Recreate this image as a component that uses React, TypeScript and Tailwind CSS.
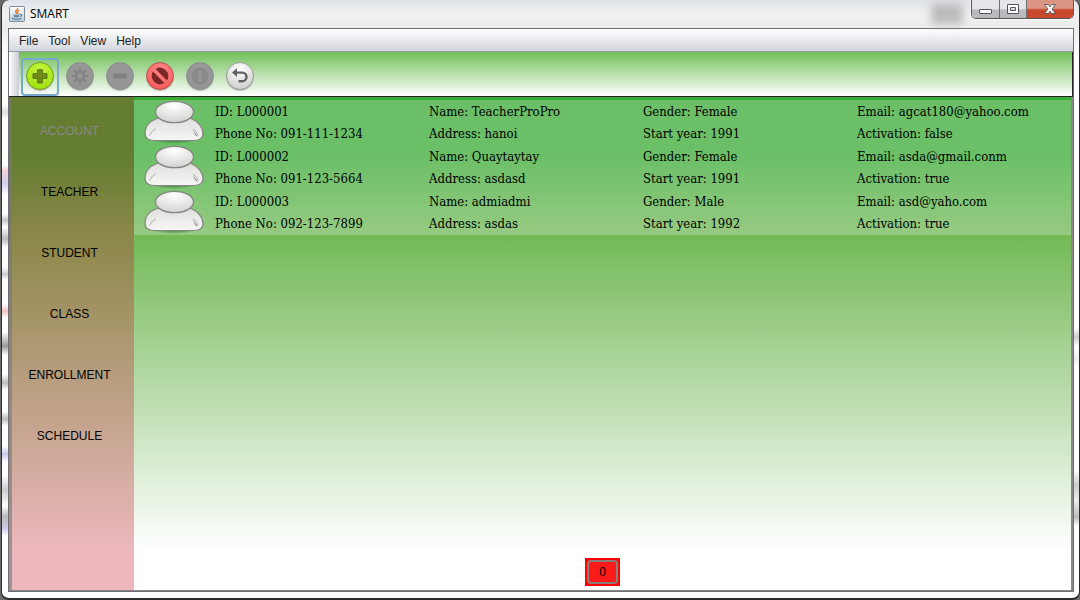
import React from "react";

const menus = ["File", "Tool", "View", "Help"];

const sections = ["ACCOUNT", "TEACHER", "STUDENT", "CLASS", "ENROLLMENT", "SCHEDULE"];

const teachers = [
  { id: "L000001", name: "TeacherProPro", gender: "Female", email: "agcat180@yahoo.com", phone: "091-111-1234", address: "hanoi", year: "1991", active: "false" },
  { id: "L000002", name: "Quaytaytay", gender: "Female", email: "asda@gmail.conm", phone: "091-123-5664", address: "asdasd", year: "1991", active: "true" },
  { id: "L000003", name: "admiadmi", gender: "Male", email: "asd@yaho.com", phone: "092-123-7899", address: "asdas", year: "1992", active: "true" },
];

function JavaIcon() {
  return (
    <svg width="16" height="16" viewBox="0 0 16 16" aria-hidden="true">
      <defs>
        <linearGradient id="javaBg" x1="0" y1="0" x2="0" y2="1">
          <stop offset="0" stopColor="#ffffff" />
          <stop offset="1" stopColor="#b9cbd9" />
        </linearGradient>
      </defs>
      <rect x="0.5" y="0.5" width="15" height="15" rx="1" fill="url(#javaBg)" stroke="#7f8b96" />
      <path d="M8.8 2c.8 1.6-2.600 2.200-2.200 3.700.2.800 1.200 1.200 1 2.300M10.300 4.200c-1 .7-2 1.100-1.800 2 .2.700.6.900.2 1.700" fill="none" stroke="#e8731c" strokeWidth="1.300" />
      <path d="M4.500 8.700c1.500.6 4.500.6 6 0M5 10.500c1.500.5 3.500.5 5 0M3 12.200c1.500 1.400 7.500 1.400 9.300.2M11 8.600c2-.6 2.400 1.300.2 2" fill="none" stroke="#4a7393" strokeWidth="1.100" />
    </svg>
  );
}

type Kind = "add" | "settings" | "remove" | "block" | "power" | "undo";

const tools: { kind: Kind; label: string; disabled: boolean }[] = [
  { kind: "add", label: "Add", disabled: false },
  { kind: "settings", label: "Settings", disabled: true },
  { kind: "remove", label: "Remove", disabled: true },
  { kind: "block", label: "Block", disabled: false },
  { kind: "power", label: "Activate", disabled: true },
  { kind: "undo", label: "Undo", disabled: false },
];

const discs: Record<Kind, string[]> = {
  add: ["#c4f53c", "#a0e010", "#5f8a1c"],
  settings: ["#989898", "#949494", "#8a8a8a"],
  remove: ["#989898", "#949494", "#8a8a8a"],
  block: ["#ff8585", "#f65c5c", "#b04040"],
  power: ["#989898", "#949494", "#8a8a8a"],
  undo: ["#ffffff", "#cfcfcf", "#8c8c8c"],
};

function Glyph({ kind }: { kind: Kind }) {
  switch (kind) {
    case "add":
      return <path d="M12.500 8.500h5v4H22v5h-4.500V22h-5v-4.500H8v-5h4.500z" fill="#6f8a1a" stroke="#546d0e" strokeWidth="0.800" />;
    case "settings":
      return (
        <g stroke="#838383" fill="none">
          <circle cx="15" cy="15" r="4" strokeWidth="2.600" />
          <path d="M15 7v3M15 20v3M7 15h3M20 15h3M9.300 9.300l2.200 2.200M18.500 18.500l2.200 2.200M9.300 20.700l2.200-2.200M18.500 11.500l2.200-2.200" strokeWidth="2.200" />
        </g>
      );
    case "remove":
      return <rect x="8.500" y="12.500" width="13" height="5" fill="#828282" stroke="#8a8a8a" strokeWidth="0.800" />;
    case "block":
      return (
        <g fill="#7c2727">
          <path d="M10.600 8A8.300 8.300 0 0 1 22 19.400z" />
          <path d="M8 10.600A8.300 8.300 0 0 0 19.400 22z" />
        </g>
      );
    case "power":
      return (
        <g>
          <circle cx="15" cy="15" r="8" fill="#8b8b8b" stroke="#858585" strokeWidth="0.600" />
          <rect x="13" y="9" width="4" height="12" rx="1.500" fill="#989898" stroke="#838383" strokeWidth="0.700" />
        </g>
      );
    case "undo":
      return (
        <g>
          <path d="M11 11.600h6.200a4.300 4.300 0 0 1 0 8.600h-3.700" fill="none" stroke="#626262" strokeWidth="2.400" />
          <path d="M7 11.600l5-4.300v8.600z" fill="#626262" />
        </g>
      );
  }
}

function ToolIcon({ kind }: { kind: Kind }) {
  const [light, mid, rim] = discs[kind];
  return (
    <svg width="30" height="32" viewBox="0 0 30 32" aria-hidden="true">
      <defs>
        <radialGradient id={"disc-" + kind} cx="0.5" cy="0.25" r="0.75">
          <stop offset="0" stopColor={light} />
          <stop offset="1" stopColor={mid} />
        </radialGradient>
        <radialGradient id={"shade-" + kind}>
          <stop offset="0.8" stopColor="#444" stopOpacity="0.4" />
          <stop offset="1" stopColor="#444" stopOpacity="0" />
        </radialGradient>
      </defs>
      <ellipse cx="15" cy="17" rx="14.500" ry="14" fill={"url(#shade-" + kind + ")"} />
      <circle cx="15" cy="15" r="13.500" fill={"url(#disc-" + kind + ")"} stroke={rim} strokeWidth="0.800" />
      <Glyph kind={kind} />
    </svg>
  );
}

function Avatar() {
  return (
    <svg width="62" height="45" viewBox="0 0 62 45" aria-hidden="true">
      <defs>
        <radialGradient id="head" cx="0.5" cy="0.2" r="0.8">
          <stop offset="0" stopColor="#ffffff" />
          <stop offset="1" stopColor="#d3d4d0" />
        </radialGradient>
        <linearGradient id="torso" x1="0" y1="0" x2="0" y2="1">
          <stop offset="0" stopColor="#e0e0de" />
          <stop offset="1" stopColor="#f6f6f6" />
        </linearGradient>
        <radialGradient id="ground">
          <stop offset="0.6" stopColor="#245c24" stopOpacity="0.7" />
          <stop offset="1" stopColor="#245c24" stopOpacity="0" />
        </radialGradient>
      </defs>
      <ellipse cx="31" cy="34" rx="31" ry="10" fill="url(#ground)" />
      <path d="M14 18.500C6 21.500 2 27 2 33c0 5 3 7.500 9 7.500h40c6 0 9-2.500 9-7 0-6-5-12-12-15z" fill="url(#torso)" stroke="#858782" strokeWidth="1.200" />
      <path d="M12.500 29c-3 1.500-4.500 4-6 6.500M50 29c3 2 4.500 4 5 6.500" fill="none" stroke="#a8a8a6" />
      <path d="M50 30l5 7-3-2z" fill="#888" />
      <ellipse cx="31.500" cy="12" rx="19" ry="10.700" fill="url(#head)" stroke="#858782" strokeWidth="1.300" />
    </svg>
  );
}

function WindowControls() {
  return (
    <div className="flex h-[19px] overflow-hidden rounded-b-[5px] border border-t-0 border-[#55575d] shadow-[0_0_0_1px_rgba(255,255,255,0.6)]">
      <button aria-label="Minimize" className="flex w-7 items-center justify-center border-r border-[#6d6f75] bg-linear-to-b from-[#e4e5e9] from-50% to-[#b9babe] to-55%">
        <svg width="13" height="11" viewBox="0 0 13 11"><rect x="0.500" y="5.500" width="12" height="4" rx="0.500" fill="#fff" stroke="#53555f" /></svg>
      </button>
      <button aria-label="Maximize" className="flex w-[27px] items-center justify-center border-r border-[#6d6f75] bg-linear-to-b from-[#e4e5e9] from-50% to-[#b9babe] to-55%">
        <svg width="13" height="11" viewBox="0 0 13 11"><path d="M.5.500h11v9H.5zM3.500 3.500v3h5v-3z" fill="#fff" fillRule="evenodd" stroke="#53555f" /></svg>
      </button>
      <button aria-label="Close" className="flex w-[46px] items-center justify-center bg-linear-to-b from-[#dd9583] from-45% to-[#c8482d] to-55%">
        <svg width="12" height="11" viewBox="0 0 12 11"><path d="M.6.500h3.600L6 2.800 7.800.500h3.600L8 5l3.400 4.500H7.800L6 7.200 4.200 9.500H.6L4 5z" fill="#fff" stroke="#53555f" strokeWidth="0.900" /></svg>
      </button>
    </div>
  );
}

function Teacher({ t }: { t: (typeof teachers)[number] }) {
  const cells = [
    "ID: " + t.id, "Name: " + t.name, "Gender: " + t.gender, "Email: " + t.email,
    "Phone No: " + t.phone, "Address: " + t.address, "Start year: " + t.year, "Activation: " + t.active,
  ];
  return (
    <li className="flex h-[45px] pl-[9px]">
      <Avatar />
      <div className="ml-[10px] grid flex-1 grid-cols-4 grid-rows-[22px_22px] pt-px text-[13px] leading-[22px] text-black">
        {cells.map((c) => (
          <span key={c} className="whitespace-nowrap">{c}</span>
        ))}
      </div>
    </li>
  );
}

/* Aero glass: tinted title bar, plus the blurred desktop showing through each side border. */
const glass =
  "bg-[linear-gradient(180deg,transparent_105px,#ddd_112px,#fff_119px,#fff_165px,#f3d5d5_170px,#d0d0f0_184px,#fff_195px,#fff_214px,#c8c8c8_220px,#fff_227px,#bbb_239px,#fff_247px,#fff_267px,#ccc_274px,#fff_280px,#fff_304px,#f0c4c4_311px,#fff_318px,#fff_332px,#999_346px,#fff_355px,#fff_374px,#bbb_383px,#fff_390px,#fff_411px,#bbb_419px,#fff_426px,#fff_446px,#c8c8ee_454px,#fff_462px,#fff_475px,#ccc_490px,#fff_506px,#bbb_516px,#c8c8e8_528px,#fff_536px),linear-gradient(180deg,transparent_328px,#ccc_337px,#fff_346px,#eee_358px,#fff_368px,#fff_470px,#ccc_485px,#eee_500px,#bbb_517px,#fff_526px),linear-gradient(180deg,#dfe2ea_0px,#f1f1f1_14px,#ececec_27px,#fff_60px)] bg-size-[7px_100%,7px_100%,100%_100%] bg-position-[left_top,right_top,left_top] bg-no-repeat";

export default function App() {
  return (
    <div className="min-h-screen bg-[#6b6b6b] pl-px font-['Liberation_Sans',Arial,sans-serif]">
      <div className={"flex min-h-screen flex-col rounded-lg border-x border-b-2 border-[#2d2d2d] pr-[5px] pb-[6px] pl-[6px] " + glass}>
        <header className="flex h-7 items-start justify-between">
          <div className="flex h-7 items-center gap-[5px] pl-px">
            <JavaIcon />
            <h1 className="font-['Open_Sans','Noto_Sans',sans-serif] text-xs text-black">SMART</h1>
          </div>
          <div className="flex">
            <div className="mt-1 mr-2 h-5 w-8 bg-[#999] opacity-60 blur-[4px]" />
            <WindowControls />
          </div>
        </header>

        <div className="flex flex-1 flex-col border border-[#6f6f73]">
          <nav className="flex h-[23px] items-center gap-[10px] border-b border-[#9a9daa] bg-linear-to-b from-white to-[#d3d6de] pt-px pl-[10px] text-xs text-[#222]">
            {menus.map((m) => (
              <button key={m}>{m}</button>
            ))}
          </nav>

          <div role="toolbar" className="flex h-[45px] border-r border-b border-[#222] bg-linear-to-b from-[#70bf56] to-white">
            <div className="w-[10px] bg-linear-to-r from-white to-[#c9ccd3]" />
            <div className="flex items-end gap-[2px] pl-[2px]">
              {tools.map((t) => (
                <button
                  key={t.kind}
                  aria-label={t.label}
                  disabled={t.disabled}
                  className={
                    t.kind === "add"
                      ? "flex h-[38px] w-[38px] items-center justify-center rounded-[4px] border-2 border-[#7aa9cf]"
                      : "flex h-[38px] w-[38px] items-center justify-center"
                  }
                >
                  <ToolIcon kind={t.kind} />
                </button>
              ))}
            </div>
          </div>

          <div className="flex flex-1 border-r-2 border-b border-[#888] bg-[linear-gradient(180deg,#3aaa35_0%,#3aaa35_12%,#73b957_28%,#fff_92%)]">
            <aside className="w-[125px] border-l-[3px] border-[#777]/60 bg-[rgba(193,26,42,0.31)] pt-[3px] pr-[7px]">
              {sections.map((s, i) => (
                <button key={s} disabled={i === 0} className="block h-[61px] w-full text-center text-xs text-black disabled:text-[#888]">
                  {s}
                </button>
              ))}
            </aside>
            <main className="flex flex-1 flex-col items-center justify-between pt-[3px] pb-1">
              <ul className="w-full bg-white/25 font-['DejaVu_Serif_Condensed','DejaVu_Serif',serif]">
                {teachers.map((t) => (
                  <Teacher key={t.id} t={t} />
                ))}
              </ul>
              <button className="h-7 w-[35px] border-2 border-[#f00] bg-[#f00] text-xs text-black">
                <span className="flex h-6 items-center justify-center rounded-[4px] border-2 border-[#8c7c7c] bg-[#ff1a1a]">0</span>
              </button>
            </main>
          </div>
        </div>
      </div>
    </div>
  );
}
